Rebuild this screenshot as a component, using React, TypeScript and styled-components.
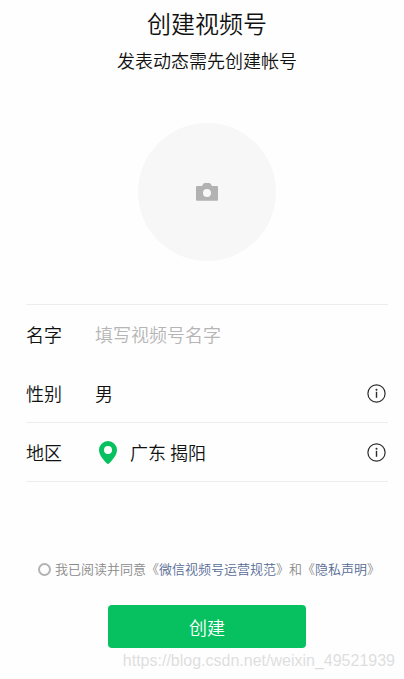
import React, { useState } from "react";
import styled, { createGlobalStyle } from "styled-components";

const GlobalStyle = createGlobalStyle`
  * { box-sizing: border-box; }
  body {
    margin: 0;
    background: #fefefe;
    color: #111;
    font-family: "Noto Sans CJK SC", sans-serif;
    font-weight: 350;
  }
  button, input { font: inherit; color: inherit; }
`;

const Page = styled.main`
  position: relative;
  display: flex;
  flex-direction: column;
  align-items: center;
  padding: 7px 16px 31px 26px;
`;

const Title = styled.h1`
  margin: 0;
  font-size: 24px;
  line-height: 32px;
  font-weight: 350;
`;

const Subtitle = styled.p`
  margin: 8px 0 0;
  font-size: 18px;
  line-height: 26px;
`;

const AvatarButton = styled.button`
  display: flex;
  align-items: center;
  justify-content: center;
  width: 138px;
  height: 138px;
  margin-top: 50px;
  padding: 0;
  border: 0;
  border-radius: 50%;
  background: #f7f7f7;
  cursor: pointer;
`;

const Form = styled.form`
  display: flex;
  flex-direction: column;
  align-items: center;
  width: 100%;
  margin-top: 43px;
`;

const Fields = styled.div`
  width: 100%;
  border-top: 1px solid #ededed;
`;

const Row = styled.div<{ $divided?: boolean }>`
  display: flex;
  align-items: center;
  height: 59px;
  border-bottom: 1px solid ${(p) => (p.$divided ? "#ededed" : "transparent")};
  font-size: 18px;
  line-height: 26px;
`;

const Label = styled.label`
  flex: 0 0 69px;
`;

const TextField = styled.input`
  flex: 1;
  min-width: 0;
  padding: 0;
  border: 0;
  outline: 0;
  background: transparent;
  &::placeholder { color: #b5b5b5; opacity: 1; }
`;

const ValueButton = styled.button`
  display: flex;
  flex: 1;
  align-items: center;
  gap: 13px;
  padding: 0;
  border: 0;
  background: transparent;
  text-align: left;
  cursor: pointer;
`;

const Pin = styled.svg`
  margin-left: 4px;
`;

const InfoButton = styled.button`
  display: flex;
  margin-right: 2px;
  padding: 0;
  border: 0;
  background: transparent;
  cursor: pointer;
`;

const Agreement = styled.div`
  display: flex;
  align-items: center;
  gap: 4px;
  margin-top: 77px;
  padding-left: 4px;
  color: #8a8a8a;
  font-size: 13px;
  line-height: 20px;
  white-space: nowrap;
`;

const Radio = styled.input`
  appearance: none;
  flex: none;
  width: 13px;
  height: 13px;
  margin: 0;
  border: 2px solid #b2b2b2;
  border-radius: 50%;
  &:checked { background: #07c160; border-color: #07c160; }
`;

const Link = styled.a`
  color: #576b95;
  text-decoration: none;
`;

const Submit = styled.button`
  width: 198px;
  height: 43px;
  margin-top: 26px;
  padding: 0;
  border: 0;
  border-radius: 4px;
  background: #07c160;
  color: #fff;
  font-size: 18px;
  cursor: pointer;
`;

const Watermark = styled.span`
  position: absolute;
  right: 9px;
  bottom: 8px;
  color: #dedede;
  font-family: "Liberation Sans", Arial, sans-serif;
  font-size: 16px;
  font-weight: 400;
  line-height: 20px;
  pointer-events: none;
`;

function CameraIcon() {
  return (
    <svg width="22" height="18" viewBox="0 0 22 18" aria-hidden="true">
      <path
        fill="#b2b2b2"
        fillRule="evenodd"
        d="M1 3H6l1.400-2.200Q7.900 0 8.800 0h4.400q.9 0 1.400.8L16 3h5Q22 3 22 4v12.700q0 1-1 1h-20Q0 17.700 0 16.700V4Q0 3 1 3ZM11 6a4 4 0 1 0 0 8a4 4 0 1 0 0-8Z"
      />
    </svg>
  );
}

function PinIcon() {
  return (
    <Pin width="18" height="23" viewBox="0 0 18 23" aria-hidden="true">
      <path
        fill="#07c160"
        fillRule="evenodd"
        d="M9 0a9 9 0 0 1 9 9c0 5-4.300 9.700-7.700 13.300q-1.300 1.300-2.600 0C4.300 18.700 0 14 0 9a9 9 0 0 1 9-9ZM9 5a4 4 0 1 0 0 8a4 4 0 1 0 0-8Z"
      />
    </Pin>
  );
}

function Info({ label }: { label: string }) {
  return (
    <InfoButton type="button" aria-label={label}>
      <svg width="19" height="19" viewBox="0 0 19 19" aria-hidden="true">
        <circle cx="9.500" cy="9.500" r="8.600" fill="none" stroke="#2b2b2b" strokeWidth="1.200" />
        <circle cx="9.500" cy="5.700" r="1" fill="#2b2b2b" />
        <path d="M9.500 7.800v6" stroke="#2b2b2b" strokeWidth="1.400" />
      </svg>
    </InfoButton>
  );
}

export default function App() {
  const [name, setName] = useState("");
  return (
    <>
      <GlobalStyle />
      <Page>
        <Title>创建视频号</Title>
        <Subtitle>发表动态需先创建帐号</Subtitle>
        <AvatarButton type="button" aria-label="头像">
          <CameraIcon />
        </AvatarButton>
        <Form onSubmit={(e) => e.preventDefault()}>
          <Fields>
            <Row>
              <Label htmlFor="name">名字</Label>
              <TextField
                id="name"
                value={name}
                onChange={(e) => setName(e.target.value)}
                placeholder="填写视频号名字"
              />
            </Row>
            <Row $divided>
              <Label htmlFor="gender">性别</Label>
              <ValueButton type="button" id="gender">男</ValueButton>
              <Info label="性别说明" />
            </Row>
            <Row $divided>
              <Label htmlFor="region">地区</Label>
              <ValueButton type="button" id="region">
                <PinIcon />
                广东 揭阳
              </ValueButton>
              <Info label="地区说明" />
            </Row>
          </Fields>
          <Agreement>
            <Radio type="radio" id="agree" name="agree" />
            <label htmlFor="agree">
              我已阅读并同意《<Link href="#terms">微信视频号运营规范</Link>》和《
              <Link href="#privacy">隐私声明</Link>》
            </label>
          </Agreement>
          <Submit type="submit">创建</Submit>
        </Form>
        <Watermark>https://blog.csdn.net/weixin_49521939</Watermark>
      </Page>
    </>
  );
}
